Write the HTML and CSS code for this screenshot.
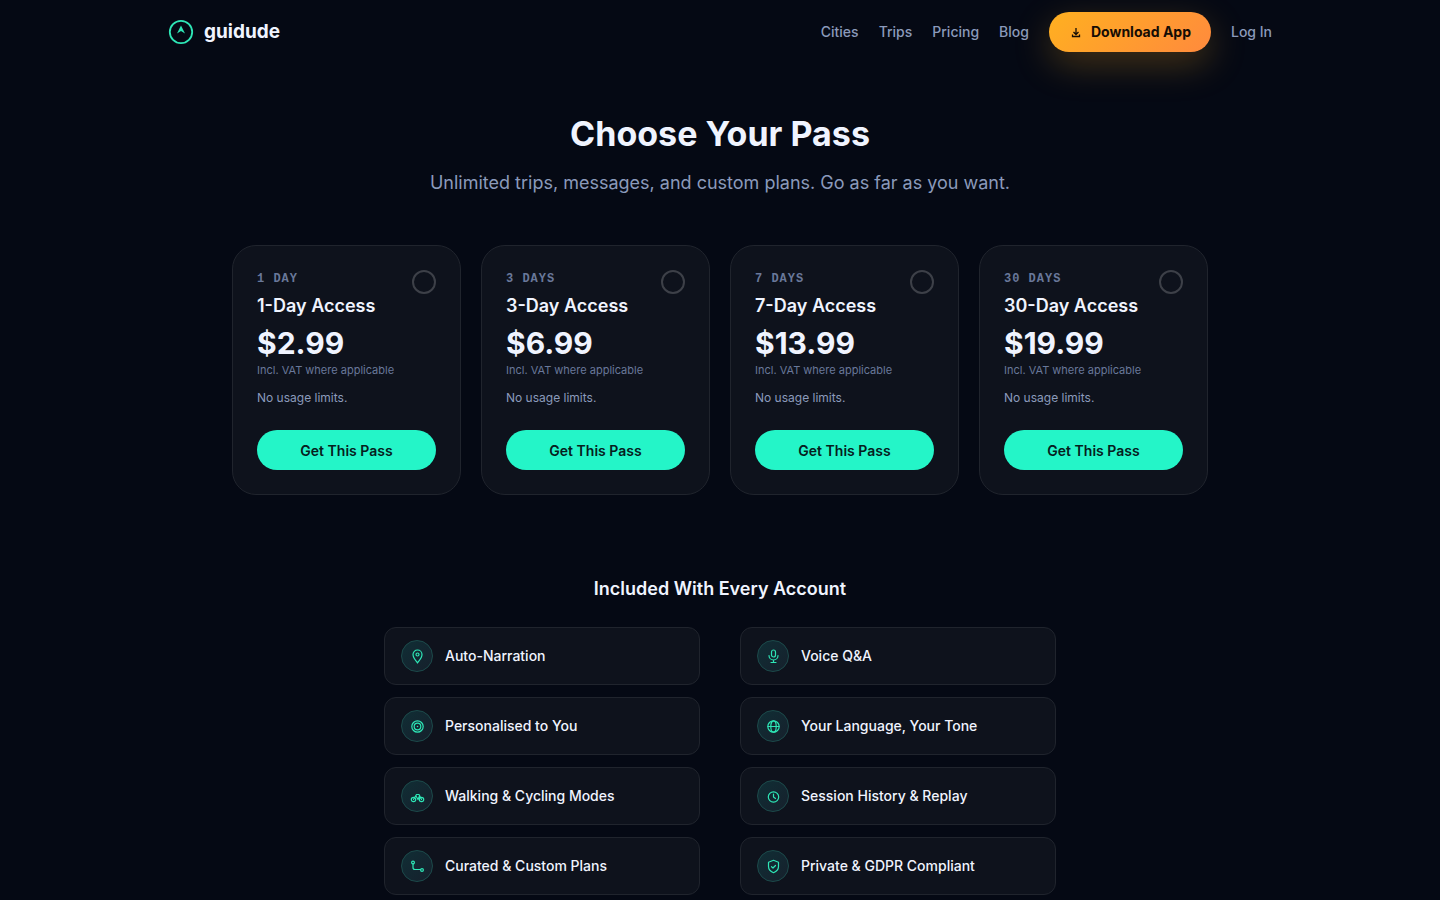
FILE: index.html
```html
<!DOCTYPE html>
<html lang="en">
<head>
    <meta charset="UTF-8">
    <meta name="viewport" content="width=device-width, initial-scale=1.0">
    <title>Pricing - guidude</title>
    <link rel="stylesheet" href="styles.css">
</head>
<body>
    <header class="header">
        <a class="logo" href="#">
            <svg class="logo-mark" viewBox="0 0 26 26" fill="none">
                <circle cx="13" cy="13" r="11.200" stroke="currentColor" stroke-width="1.800"/>
                <path d="M13 6.500l4 8-4-2.500-4 2.500z" fill="currentColor"/>
            </svg>
            guidude
        </a>
        <nav class="nav">
            <a href="#">Cities</a>
            <a href="#">Trips</a>
            <a href="#">Pricing</a>
            <a href="#">Blog</a>
            <a class="download" href="#">
                <svg class="download-icon" viewBox="0 0 14 14" fill="none" stroke="currentColor">
                    <path d="M7 3v6M4.500 7L7 9.500 9.500 7M3.500 9.500v2h7v-2"/>
                </svg>
                Download App
            </a>
            <a href="#">Log In</a>
        </nav>
    </header>

    <main>
        <section class="intro">
            <h1>Choose Your Pass</h1>
            <p>Unlimited trips, messages, and custom plans. Go as far as you want.</p>
        </section>

        <section class="passes">
            <article class="pass">
                <input class="pass-radio" type="radio" name="pass" aria-label="1-Day Access">
                <p class="pass-label">1 DAY</p>
                <h2>1-Day Access</h2>
                <p class="price">$2.99</p>
                <p class="vat">Incl. VAT where applicable</p>
                <p class="limits">No usage limits.</p>
                <button class="get-pass" type="button">Get This Pass</button>
            </article>
            <article class="pass">
                <input class="pass-radio" type="radio" name="pass" aria-label="3-Day Access">
                <p class="pass-label">3 DAYS</p>
                <h2>3-Day Access</h2>
                <p class="price">$6.99</p>
                <p class="vat">Incl. VAT where applicable</p>
                <p class="limits">No usage limits.</p>
                <button class="get-pass" type="button">Get This Pass</button>
            </article>
            <article class="pass">
                <input class="pass-radio" type="radio" name="pass" aria-label="7-Day Access">
                <p class="pass-label">7 DAYS</p>
                <h2>7-Day Access</h2>
                <p class="price">$13.99</p>
                <p class="vat">Incl. VAT where applicable</p>
                <p class="limits">No usage limits.</p>
                <button class="get-pass" type="button">Get This Pass</button>
            </article>
            <article class="pass">
                <input class="pass-radio" type="radio" name="pass" aria-label="30-Day Access">
                <p class="pass-label">30 DAYS</p>
                <h2>30-Day Access</h2>
                <p class="price">$19.99</p>
                <p class="vat">Incl. VAT where applicable</p>
                <p class="limits">No usage limits.</p>
                <button class="get-pass" type="button">Get This Pass</button>
            </article>
        </section>

        <section class="included">
            <h2>Included With Every Account</h2>
            <ul class="features">
                <li>
                    <span class="badge"><svg viewBox="0 0 16 16">
                        <path d="M8.500 15C7 12.700 4 10 4 6.500a4.500 4.500 0 0 1 9 0C13 10 10 12.700 8.500 15z"/>
                        <circle cx="8.500" cy="6.500" r="1.500"/>
                    </svg></span>
                    Auto-Narration
                </li>
                <li>
                    <span class="badge"><svg viewBox="0 0 16 16">
                        <rect x="6.500" y="2" width="4" height="7" rx="2"/>
                        <path d="M4 7.500a4.500 4.500 0 0 0 9 0M8.500 12v2.500M6 14.500h5"/>
                    </svg></span>
                    Voice Q&amp;A
                </li>
                <li>
                    <span class="badge"><svg viewBox="0 0 16 16">
                        <circle cx="8.500" cy="8.500" r="5.700"/>
                        <circle cx="8.500" cy="8.500" r="3.300"/>
                        <circle class="dot" cx="8.500" cy="8.500" r="0.800"/>
                    </svg></span>
                    Personalised to You
                </li>
                <li>
                    <span class="badge"><svg viewBox="0 0 16 16">
                        <circle cx="8.500" cy="8.500" r="5.700"/>
                        <ellipse cx="8.500" cy="8.500" rx="2.700" ry="5.700"/>
                        <path d="M3 8.500h11"/>
                    </svg></span>
                    Your Language, Your Tone
                </li>
                <li>
                    <span class="badge"><svg viewBox="0 0 16 16">
                        <circle cx="4.500" cy="11.500" r="2.200"/>
                        <circle cx="12.500" cy="11.500" r="2.200"/>
                        <path d="M4.500 11.500L7.500 6.500H10l2.500 5M7 8l2 3.500L10.500 8"/>
                    </svg></span>
                    Walking &amp; Cycling Modes
                </li>
                <li>
                    <span class="badge"><svg viewBox="0 0 16 16">
                        <circle cx="8.500" cy="9" r="5.200"/>
                        <path d="M8.500 6v3l2 1.500"/>
                    </svg></span>
                    Session History &amp; Replay
                </li>
                <li>
                    <span class="badge"><svg viewBox="0 0 16 16">
                        <circle cx="4" cy="4.500" r="1.400"/>
                        <circle cx="13" cy="12" r="1.400"/>
                        <path d="M4 6v3.500a2 2 0 0 0 2 2h5.500"/>
                    </svg></span>
                    Curated &amp; Custom Plans
                </li>
                <li>
                    <span class="badge"><svg viewBox="0 0 16 16">
                        <path d="M8.500 2.300l5 1.900v4.300c0 3-2 5-5 6.200-3-1.200-5-3.200-5-6.200V4.200z"/>
                        <path d="M6.500 8.700L8 10l2.500-2.500"/>
                    </svg></span>
                    Private &amp; GDPR Compliant
                </li>
            </ul>
        </section>
    </main>
</body>
</html>
```
FILE: styles.css
```css
* {
    margin: 0;
    padding: 0;
    box-sizing: border-box;
}

body {
    font-family: Inter, sans-serif;
    background: #050914;
    color: #f0f4ff;
    font-size: 14px;
    line-height: 20px;
}

a {
    color: inherit;
    text-decoration: none;
}

.header {
    max-width: 1152px;
    height: 64px;
    margin: 0 auto;
    padding: 0 24px;
    display: flex;
    align-items: center;
    justify-content: space-between;
}

.logo {
    display: flex;
    align-items: center;
    gap: 10px;
    font-size: 19px;
    font-weight: 700;
}

.logo-mark {
    width: 26px;
    height: 26px;
    color: #2ee6b6;
}

.nav {
    display: flex;
    align-items: center;
    gap: 20px;
    color: #8b9abb;
    font-weight: 500;
}

.download {
    display: flex;
    align-items: center;
    gap: 8px;
    height: 40px;
    padding: 0 20px;
    border-radius: 20px;
    background: linear-gradient(135deg, #ffb020, #ff8a3d);
    box-shadow: 0 12px 36px rgba(255, 176, 32, 0.25);
    color: #150d05;
    font-weight: 700;
}

.download-icon {
    width: 14px;
    height: 14px;
    stroke-width: 1.3;
}

.intro {
    padding: 48px 24px;
    text-align: center;
}

.intro h1 {
    margin-bottom: 12px;
    font-size: 34px;
    font-weight: 700;
    line-height: 44px;
}

.intro p {
    color: #8b9abb;
    font-size: 18px;
    line-height: 29px;
}

.passes {
    max-width: 1024px;
    margin: 0 auto;
    padding: 0 24px;
    display: grid;
    grid-template-columns: repeat(4, 1fr);
    gap: 20px;
}

.pass {
    position: relative;
    padding: 24px;
    border: 1px solid #20242d;
    border-radius: 24px;
    background: #0e121c;
}

.pass-radio {
    position: absolute;
    top: 24px;
    right: 24px;
    width: 24px;
    height: 24px;
    border: 2px solid #3d4048;
    border-radius: 50%;
    appearance: none;
}

.pass-radio:checked {
    background: #24f5c8;
}

.pass-label {
    margin-bottom: 6px;
    color: #69789a;
    font-family: "Liberation Mono", monospace;
    font-size: 12px;
    font-weight: 700;
    line-height: 18px;
    letter-spacing: 1px;
}

.pass h2 {
    margin-bottom: 8px;
    font-size: 18px;
    font-weight: 600;
    line-height: 24px;
}

.price {
    font-size: 30px;
    font-weight: 700;
    line-height: 34px;
}

.vat {
    margin-bottom: 8px;
    color: #69789a;
    font-size: 11px;
    line-height: 20px;
}

.limits {
    margin-bottom: 22px;
    color: #8b9abb;
    font-size: 12px;
}

.get-pass {
    display: block;
    width: 100%;
    height: 40px;
    border: none;
    border-radius: 20px;
    background: #24f5c8;
    color: #06201d;
    font-family: inherit;
    font-size: 14px;
    font-weight: 600;
    cursor: pointer;
}

.included {
    max-width: 720px;
    margin: 0 auto;
    padding: 80px 24px;
}

.included h2 {
    margin-bottom: 24px;
    font-size: 18px;
    font-weight: 600;
    line-height: 28px;
    text-align: center;
}

.features {
    display: grid;
    grid-template-columns: 1fr 1fr;
    gap: 12px 40px;
    list-style: none;
}

.features li {
    display: flex;
    align-items: center;
    gap: 12px;
    padding: 12px 16px;
    border: 1px solid #20242d;
    border-radius: 12px;
    background: #0e121c;
    font-weight: 500;
}

.badge {
    display: flex;
    align-items: center;
    justify-content: center;
    width: 32px;
    height: 32px;
    border: 1px solid #1c4a4b;
    border-radius: 50%;
    background: linear-gradient(135deg, #102e35, #16202c);
}

.badge svg {
    width: 16px;
    height: 16px;
    fill: none;
    stroke: #2ee6b6;
    stroke-width: 1.2;
    stroke-linecap: round;
    stroke-linejoin: round;
}

.badge .dot {
    fill: #2ee6b6;
    stroke: none;
}
```
